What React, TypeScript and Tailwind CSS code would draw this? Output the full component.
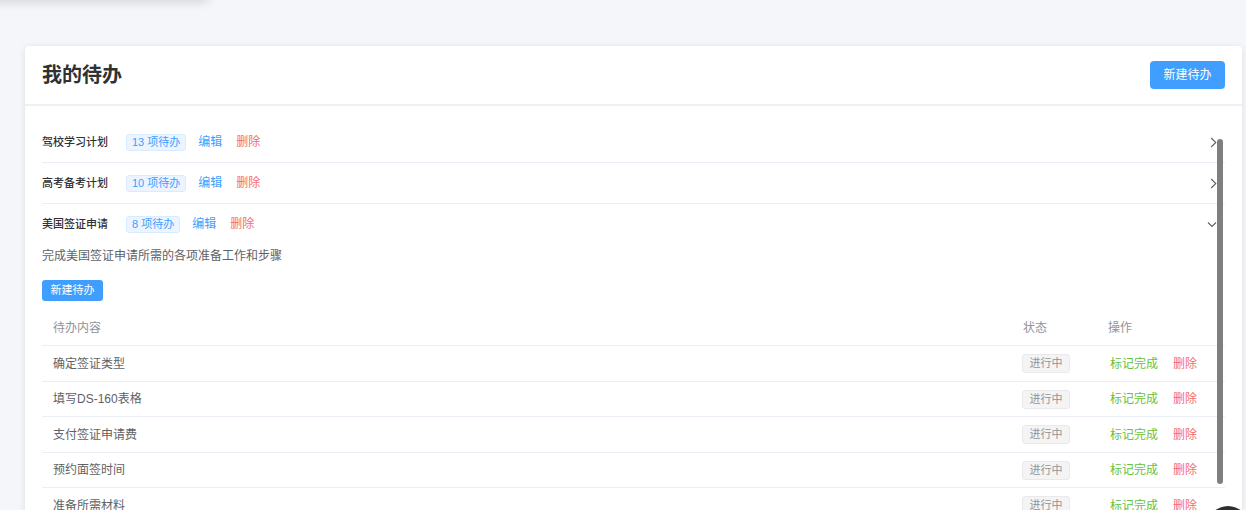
import React from 'react';

type Plan = { title: string; count: number; open?: boolean; desc?: string; todos?: string[] };

const plans: Plan[] = [
  { title: '驾校学习计划', count: 13 },
  { title: '高考备考计划', count: 10 },
  {
    title: '美国签证申请',
    count: 8,
    open: true,
    desc: '完成美国签证申请所需的各项准备工作和步骤',
    todos: ['确定签证类型', '填写DS-160表格', '支付签证申请费', '预约面签时间', '准备所需材料', '参加签证面试', '等待签证结果', '领取护照'],
  },
];

function ArrowRight() {
  return (
    <svg width="7" height="11" viewBox="0 0 7 11" fill="none">
      <path d="M1.2 1 L5.8 5.5 L1.2 10" stroke="#606266" strokeWidth="1.1" />
    </svg>
  );
}

function ArrowDown() {
  return (
    <svg width="10" height="7" viewBox="0 0 10 7" fill="none">
      <path d="M1 1.5 L5 5.5 L9 1.5" stroke="#606266" strokeWidth="1.1" />
    </svg>
  );
}

function PlanRow({ plan }: { plan: Plan }) {
  return (
    <div className={plan.open ? '' : 'border-b border-[#ebeef5]'}>
      <div className="flex items-center h-[40px] pr-[8px]">
        <span className="w-[84px] text-[11px] font-medium text-[#303133]">{plan.title}</span>
        <span className="h-[17px] px-[5px] flex items-center rounded-[3px] border border-[#d9ecff] bg-[#ecf5ff] text-[11px] text-[#409eff]">
          {plan.count} 项待办
        </span>
        <button className="ml-[12px] text-[12px] text-[#409eff]">编辑</button>
        <button className="ml-[14px] text-[12px] text-[#f56c6c]">删除</button>
        <span className="ml-auto flex items-center">{plan.open ? <ArrowDown /> : <ArrowRight />}</span>
      </div>

      {plan.open && (
        <div className="pb-4">
          <p className="text-[12px] leading-[18px] text-[#606266] mt-[3px]">{plan.desc}</p>
          <button className="mt-[15px] h-[21px] w-[61px] rounded-[3px] bg-[#409eff] text-[11px] text-white">
            新建待办
          </button>
          <div className="mt-[10px]">
            <div className="grid grid-cols-[1fr_85px_128px] h-[35px] items-center border-b border-[#ebeef5] text-[12px] text-[#909399]">
              <span className="pl-[11px]">待办内容</span>
              <span className="pl-[11px]">状态</span>
              <span className="pl-[11px]">操作</span>
            </div>
            {plan.todos!.map((t) => (
              <div
                key={t}
                className="grid grid-cols-[1fr_85px_128px] h-[35.5px] items-center border-b border-[#ebeef5] text-[12px]"
              >
                <span className="pl-[11px] text-[#606266]">{t}</span>
                <span className="pl-[10px]">
                  <span className="inline-flex h-[19px] w-[48px] items-center justify-center rounded-[3px] border border-[#e9e9eb] bg-[#f4f4f5] text-[11px] text-[#909399]">
                    进行中
                  </span>
                </span>
                <span className="pl-[13px] flex items-center">
                  <button className="text-[#67c23a]">标记完成</button>
                  <button className="ml-[15px] text-[#f56c6c]">删除</button>
                </span>
              </div>
            ))}
          </div>
        </div>
      )}
    </div>
  );
}

export default function App() {
  return (
    <div className="relative min-h-screen overflow-hidden bg-[#f5f6f9] font-['Liberation_Sans','Noto_Sans_CJK_SC',sans-serif]">
      {/* 上部の切れた要素の影 */}
      <div className="absolute left-[-10px] top-[-44px] h-[44px] w-[220px] rounded-lg bg-[#f5f6f9] shadow-[0_3px_10px_rgba(0,0,0,0.12)]" />

      <div className="pt-[46px] pl-[25px]">
        <div className="relative w-[1217px] rounded-[4px] bg-white shadow-[0_1px_6px_rgba(0,0,0,0.1)]">
          <div className="flex items-center justify-between h-[60px] px-[17px] border-b-2 border-[#eef0f5]">
            <h1 className="text-[20px] font-bold text-[#303133]">我的待办</h1>
            <button className="h-[28px] w-[75px] rounded-[4px] bg-[#409eff] text-[12px] text-white">新建待办</button>
          </div>

          <div className="relative px-[17px] pt-[16px]">
            {plans.map((p) => (
              <PlanRow key={p.title} plan={p} />
            ))}
            {/* scrollbar thumb */}
            <div className="absolute right-[19px] top-[33px] h-[345px] w-[6px] rounded-full bg-[#7f7f7f]" />
          </div>
        </div>
      </div>

      {/* 右下のフローティングボタン */}
      <div className="fixed left-[1208px] top-[506px] h-[40px] w-[40px] rounded-full bg-[#2f2f2f]" />
    </div>
  );
}
